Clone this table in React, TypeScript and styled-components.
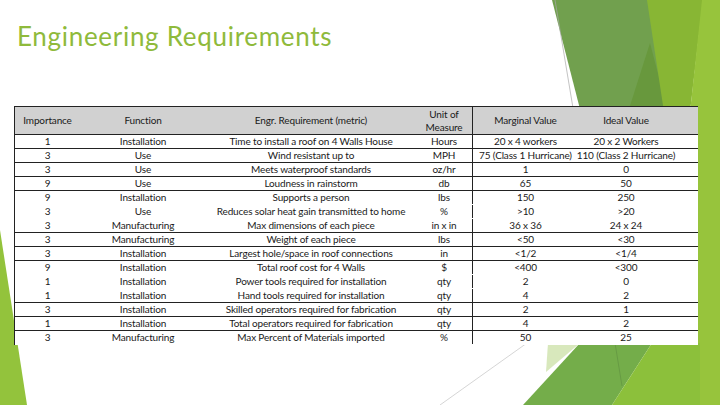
import styled, { createGlobalStyle } from "styled-components";

const GlobalStyle = createGlobalStyle`
  html, body {
    margin: 0;
    padding: 0;
    background: #ffffff;
  }
`;

const Slide = styled.div`
  position: relative;
  width: 720px;
  height: 405px;
  overflow: hidden;
  background: #ffffff;
`;

const Backdrop = styled.svg`
  position: absolute;
  inset: 0;
  width: 720px;
  height: 405px;
`;

const Content = styled.div`
  position: relative;
  display: flex;
  flex-direction: column;
  padding: 20px 0 0 14px;
`;

const Title = styled.h1`
  margin: 0 0 0 3px;
  height: 32px;
  font-family: "Lato", "Open Sans", sans-serif;
  font-weight: 400;
  font-size: 26px;
  letter-spacing: 0.7px;
  line-height: 32px;
  color: #8fba3b;
`;

const Table = styled.div`
  margin-top: 54px;
  width: 684px;
  background: #ffffff;
  border-left: 1px solid #222;
  box-sizing: border-box;
  font-family: "Lato", "Liberation Sans", sans-serif;
  font-size: 10px;
  color: #1a1a1a;
`;

const Row = styled.div<{ $head?: boolean; $ruled?: boolean }>`
  display: grid;
  grid-template-columns: 65px 126px 210px 56px 106px 96px;
  padding-right: 24px;
  height: ${(p) => (p.$head ? "29px" : "14px")};
  background: ${(p) => (p.$head ? "#d1d1d1" : "transparent")};
  border-top: ${(p) => (p.$head ? "1px solid #222" : "none")};
  border-bottom: ${(p) =>
    p.$head || p.$ruled ? "1px solid #222" : "1px solid transparent"};
  box-sizing: border-box;
`;

const Cell = styled.div<{ $split?: boolean }>`
  display: flex;
  flex-direction: column;
  align-items: center;
  justify-content: center;
  text-align: center;
  white-space: nowrap;
  line-height: 13px;
  letter-spacing: -0.15px;
  border-left: ${(p) => (p.$split ? "1px solid #222" : "none")};
`;

type Req = [string, string, string, string, string, string, boolean];

const rows: Req[] = [
  ["1", "Installation", "Time to install a roof on 4 Walls House", "Hours", "20 x 4 workers", "20 x 2 Workers", true],
  ["3", "Use", "Wind resistant up to", "MPH", "75 (Class 1 Hurricane)", "110 (Class 2 Hurricane)", true],
  ["3", "Use", "Meets waterproof standards", "oz/hr", "1", "0", true],
  ["9", "Use", "Loudness in rainstorm", "db", "65", "50", true],
  ["9", "Installation", "Supports a person", "lbs", "150", "250", false],
  ["3", "Use", "Reduces solar heat gain transmitted to home", "%", ">10", ">20", false],
  ["3", "Manufacturing", "Max dimensions of each piece", "in x in", "36 x 36", "24 x 24", true],
  ["3", "Manufacturing", "Weight of each piece", "lbs", "<50", "<30", true],
  ["3", "Installation", "Largest hole/space in roof connections", "in", "<1/2", "<1/4", true],
  ["9", "Installation", "Total roof cost for 4 Walls", "$", "<400", "<300", false],
  ["1", "Installation", "Power tools required for installation", "qty", "2", "0", false],
  ["1", "Installation", "Hand tools required for installation", "qty", "4", "2", true],
  ["3", "Installation", "Skilled operators required for fabrication", "qty", "2", "1", true],
  ["1", "Installation", "Total operators required for fabrication", "qty", "4", "2", true],
  ["3", "Manufacturing", "Max Percent of Materials imported", "%", "50", "25", false],
];

function Shapes() {
  return (
    <Backdrop viewBox="0 0 720 405">
      {/* top right facets */}
      <polygon points="552,0 650,0 700,343 640,343" fill="#71a04e" />
      <polygon points="650,43 668,112 628,112" fill="#68983d" />
      <polygon points="647,0 703,0 690,112 664,112" fill="#88b634" />
      <polygon points="702,0 720,0 720,405 688,405 690,112" fill="#97c43c" />
      <line x1="555" y1="0" x2="573" y2="108" stroke="#a9a9a9" strokeWidth="0.7" />
      {/* bottom right facets */}
      <line x1="527" y1="343" x2="440" y2="405" stroke="#b9b9b9" strokeWidth="0.6" />
      <polygon points="548,343 580,343 546,372" fill="#d8e8bc" />
      <polygon points="580,343 652,343 612,405 523,405" fill="#74ad4a" />
      <polygon points="652,343 700,343 700,405 612,405" fill="#8cc03b" />
      <line x1="615" y1="343" x2="622" y2="386" stroke="#5e8f40" strokeWidth="0.6" />
      {/* left facet */}
      <polygon points="0,230 27,405 0,405" fill="#93c33c" />
    </Backdrop>
  );
}

export default function App() {
  return (
    <Slide>
      <GlobalStyle />
      <Shapes />
      <Content>
        <Title>Engineering Requirements</Title>
        <Table>
          <Row $head>
            <Cell>Importance</Cell>
            <Cell>Function</Cell>
            <Cell>Engr. Requirement (metric)</Cell>
            <Cell>
              <span>Unit of</span>
              <span>Measure</span>
            </Cell>
            <Cell $split>Marginal Value</Cell>
            <Cell>Ideal Value</Cell>
          </Row>
          {rows.map((r, i) => (
            <Row key={i} $ruled={r[6]}>
              <Cell>{r[0]}</Cell>
              <Cell>{r[1]}</Cell>
              <Cell>{r[2]}</Cell>
              <Cell>{r[3]}</Cell>
              <Cell $split>{r[4]}</Cell>
              <Cell>{r[5]}</Cell>
            </Row>
          ))}
        </Table>
      </Content>
    </Slide>
  );
}
